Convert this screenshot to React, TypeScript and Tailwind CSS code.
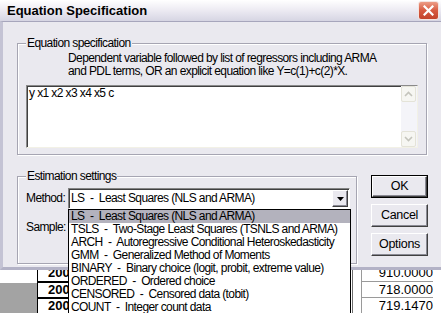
import React from "react";

const items = [
  "LS  -  Least Squares (NLS and ARMA)",
  "TSLS  -  Two-Stage Least Squares (TSNLS and ARMA)",
  "ARCH  -  Autoregressive Conditional Heteroskedasticity",
  "GMM  -  Generalized Method of Moments",
  "BINARY  -  Binary choice (logit, probit, extreme value)",
  "ORDERED  -  Ordered choice",
  "CENSORED  -  Censored data (tobit)",
  "COUNT  -  Integer count data",
];

function Chevron({ up }: { up?: boolean }) {
  return (
    <svg width="9" height="6" viewBox="0 0 9 6">
      <path d={up ? "M1 5 L4.5 1.5 L8 5" : "M1 1 L4.5 4.5 L8 1"} fill="none" stroke="#c4c4bc" strokeWidth="1.6" />
    </svg>
  );
}

function ScrollBtn({ up }: { up?: boolean }) {
  return (
    <div className="h-[16px] w-[15px] flex items-center justify-center rounded-[2px] border border-[#e4e3d8] bg-[#f6f6f2]">
      <Chevron up={up} />
    </div>
  );
}

function Button({ label, isDefault }: { label: string; isDefault?: boolean }) {
  const inner = (
    <div className="h-full w-full flex items-center justify-center border border-t-white border-l-white border-r-[#404040] border-b-[#404040] shadow-[inset_-1px_-1px_0_#8a8a94] text-[12.5px] tracking-[-0.3px]">
      {label}
    </div>
  );
  return isDefault ? (
    <div className="h-[23px] w-[57px] border border-black">{inner}</div>
  ) : (
    <div className="h-[23px] w-[57px]">{inner}</div>
  );
}

export default function App() {
  return (
    <div className="relative w-[441px] h-[313px] overflow-hidden bg-white text-black font-['Liberation_Sans',Arial,sans-serif]">
      {/* dialog window */}
      <div className="h-[270px] w-[460px] flex flex-col">
        <div className="h-[21px] flex items-start bg-gradient-to-b from-white via-[#eceaf2] to-[#d6d5e3]">
          <div className="w-[418px] pl-[7px] font-bold text-[13px] leading-[21px]">Equation Specification</div>
          <div className="mt-[1px] h-[19px] w-[21px] rounded-[3px] border border-[#f4e4e0] bg-gradient-to-b from-[#ec9c86] via-[#d75a40] to-[#c3432b] flex items-center justify-center">
            <svg width="11" height="11" viewBox="0 0 11 11">
              <path d="M1.5 1.5 L9.5 9.5 M9.5 1.5 L1.5 9.5" stroke="white" strokeWidth="2.2" strokeLinecap="square" />
            </svg>
          </div>
        </div>
        <div className="flex-1 border-t border-t-[#a7a6bc] border-l-[3px] border-l-[#c4c3d4] border-b-[3px] border-b-[#b3b2c6] bg-[#eae9ef] pl-[14px] text-[12px] tracking-[-0.6px] leading-[13px]">
          {/* Equation specification group */}
          <div className="relative mt-[21px] w-[410px] h-[112px] border border-[#a6a5b2] shadow-[1px_1px_0_#fff,inset_1px_1px_0_#fff]">
            <span className="absolute left-[8px] -top-[7px] px-[1px] bg-[#eae9ef]">Equation specification</span>
            <div className="pt-[8px] pl-[50px]">
              <div>Dependent variable followed by list of regressors including ARMA</div>
              <div>and PDL terms, OR an explicit equation like Y=c(1)+c(2)*X.</div>
            </div>
            <div className="ml-[8px] mt-[7px] w-[392px] h-[63px] flex bg-white border border-t-[#8a8a8a] border-l-[#8a8a8a] border-r-[#f2f1e6] border-b-[#f2f1e6] shadow-[inset_1px_1px_0_#404040]">
              <div className="flex-1 pl-[2px] pt-[1px]">y x1 x2 x3 x4 x5 c</div>
              <div className="w-[16px] flex flex-col justify-between bg-[#f4f4f9]">
                <ScrollBtn up />
                <ScrollBtn />
              </div>
            </div>
          </div>

          {/* Estimation settings + buttons */}
          <div className="mt-[21px] flex items-start">
            <div className="relative w-[340px] h-[88px] border border-[#a6a5b2] shadow-[1px_1px_0_#fff,inset_1px_1px_0_#fff]">
              <span className="absolute left-[8px] -top-[7px] px-[1px] bg-[#eae9ef]">Estimation settings</span>
              <div className="pt-[11px] pl-[8px]">
                <div className="flex items-center h-[21px]">
                  <span className="w-[42px]">Method:</span>
                  <div className="w-[282px] h-[21px] flex items-center bg-white border border-t-[#848484] border-l-[#848484] border-r-white border-b-white shadow-[inset_1px_1px_0_#404040]">
                    <span className="flex-1 pl-[2px] whitespace-pre">LS  -  Least Squares (NLS and ARMA)</span>
                    <div className="mr-[1px] h-[17px] w-[16px] flex items-center justify-center bg-[#eae9ef] border border-t-white border-l-white border-r-[#404040] border-b-[#404040] shadow-[inset_-1px_-1px_0_#8a8a94]">
                      <svg width="7" height="4" viewBox="0 0 7 4">
                        <path d="M0 0 H7 L3.5 4 Z" fill="black" />
                      </svg>
                    </div>
                  </div>
                </div>
                <div className="mt-[8px] flex items-center h-[21px]">
                  <span className="w-[42px]">Sample:</span>
                </div>
              </div>
            </div>
            <div className="ml-[14px] -mt-[1px] flex flex-col gap-[6px]">
              <Button label="OK" isDefault />
              <Button label="Cancel" />
              <Button label="Options" />
            </div>
          </div>
        </div>
      </div>

      {/* spreadsheet behind the dialog */}
      <div className="h-[43px] flex">
        <div className="w-[37px] flex flex-col">
          <div className="h-[13px] bg-white" />
          <div className="flex-1 bg-[#a3a3a3]" />
        </div>
        <div className="w-[60px] flex flex-col border-l border-black font-bold text-[13px]">
          <div className="h-[14px] overflow-hidden border-b-2 border-black pl-[10px]">
            <div className="-mt-[3.5px] leading-[12px]">2001</div>
          </div>
          <div className="h-[16px] border-b-2 border-black pl-[10px] leading-[14px]">2001</div>
          <div className="flex-1 pl-[10px] leading-[14px]">2001</div>
        </div>
        <div className="flex-1" />
        <div className="w-[9px] border-l border-[#6e6e6e]" />
        <div className="w-[80px] flex flex-col border-l border-[#9a9a9a] text-[13px] text-right pr-[8px]">
          <div className="h-[14px] overflow-hidden border-b border-[#9a9a9a]">
            <div className="-mt-[3.5px] leading-[12px]">910.0000</div>
          </div>
          <div className="h-[16px] border-b border-[#9a9a9a] leading-[15px]">718.0000</div>
          <div className="flex-1 leading-[15px]">719.1470</div>
        </div>
      </div>

      {/* open dropdown list */}
      <div className="absolute left-[68px] top-[209px] w-[283px] h-[110px] border border-black bg-white text-[12px] tracking-[-0.6px]">
        {items.map((t, i) => (
          <div key={t} className={`h-[13px] leading-[13px] pl-[2px] whitespace-pre ${i === 0 ? "bg-[#b3b2bd]" : ""}`}>
            {t}
          </div>
        ))}
      </div>
    </div>
  );
}
